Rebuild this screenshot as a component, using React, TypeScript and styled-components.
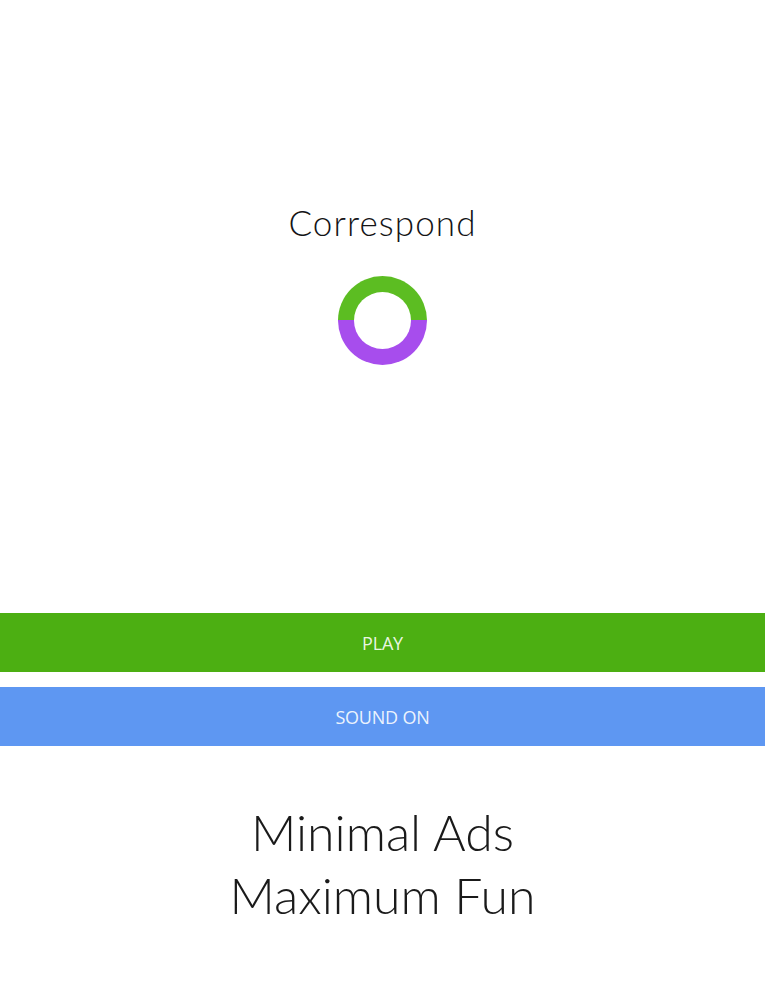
import React from "react";
import styled, { createGlobalStyle } from "styled-components";

const Global = createGlobalStyle`
  html, body { margin: 0; padding: 0; background: #ffffff; }
  * { box-sizing: border-box; }
`;

const Page = styled.div`
  width: 765px;
  height: 1000px;
  display: flex;
  flex-direction: column;
  align-items: stretch;
  background: #ffffff;
  font-family: Lato, "Noto Sans", sans-serif;
`;

const Header = styled.div`
  display: flex;
  flex-direction: column;
  align-items: center;
  padding-top: 198px;
  height: 613px;
`;

const Title = styled.h1`
  margin: 0;
  font-family: Lato, "Noto Sans", sans-serif;
  font-weight: 300;
  font-size: 35px;
  line-height: 48px;
  letter-spacing: 1.1px;
  color: #141416;
`;

const Ring = styled.div`
  margin-top: 30px;
  width: 89px;
  height: 89px;
  border-radius: 50%;
  background: linear-gradient(to bottom, #5cbd22 0 50%, #a74ded 50% 100%);
  display: flex;
  align-items: center;
  justify-content: center;
`;

const Hole = styled.div`
  width: 57px;
  height: 57px;
  border-radius: 50%;
  background: #ffffff;
`;

const Buttons = styled.div`
  display: flex;
  flex-direction: column;
  gap: 15px;
`;

const Bar = styled.button<{ $bg: string }>`
  display: flex;
  align-items: center;
  justify-content: center;
  width: 100%;
  height: 59px;
  border: none;
  margin: 0;
  padding: 0;
  background: ${(p) => p.$bg};
  color: rgba(255, 255, 255, 0.9);
  font-family: "Open Sans", "Noto Sans", sans-serif;
  font-weight: 400;
  font-size: 18px;
  letter-spacing: -0.2px;
`;

const Tagline = styled.div`
  margin-top: 55px;
  display: flex;
  flex-direction: column;
  align-items: center;
  font-family: Lato, "Noto Sans", sans-serif;
  font-weight: 300;
  font-size: 50px;
  line-height: 63px;
  color: #1a1a1a;
`;

export default function App() {
  return (
    <>
      <Global />
      <Page>
        <Header>
          <Title>Correspond</Title>
          <Ring>
            <Hole />
          </Ring>
        </Header>
        <Buttons>
          <Bar $bg="#4caf12">PLAY</Bar>
          <Bar $bg="#5e97f2">SOUND ON</Bar>
        </Buttons>
        <Tagline>
          <span>Minimal Ads</span>
          <span>Maximum Fun</span>
        </Tagline>
      </Page>
    </>
  );
}
